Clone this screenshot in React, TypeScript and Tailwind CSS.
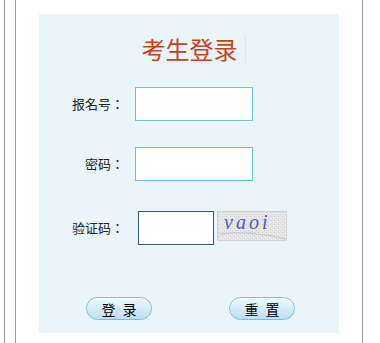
import React from "react";

const cjk = "font-['Microsoft_YaHei','Noto_Sans_CJK_SC',sans-serif]";
const labelFont = "font-['Noto_Sans_CJK_TC','Noto_Sans_CJK_SC',sans-serif]";

function Field({ label }: { label: string }) {
  return (
    <div className="flex items-center">
      <div className={`w-[86px] pr-[1px] text-right text-[13px] leading-[16px] text-[#222] ${labelFont}`}>{label}</div>
      <input
        type="text"
        className="ml-[10px] h-[34px] w-[118px] border border-[#67c2e2] bg-white outline-none"
      />
    </div>
  );
}

function Captcha() {
  return (
    <div className="relative ml-[3px] h-[30px] w-[70px] overflow-hidden border border-[#d0d0d0] bg-[#e4e4e4]">
      <svg className="absolute inset-0" width="70" height="30" viewBox="0 0 70 30">
        <defs>
          <pattern id="noise" width="4" height="4" patternUnits="userSpaceOnUse">
            <rect width="4" height="4" fill="#e6e6e6" />
            <rect x="0" y="0" width="1" height="1" fill="#c8c8c8" />
            <rect x="2" y="2" width="1" height="1" fill="#d2d2d2" />
            <rect x="3" y="1" width="1" height="1" fill="#f4f4f4" />
          </pattern>
        </defs>
        <rect width="70" height="30" fill="url(#noise)" />
        <path d="M2 22 Q 30 18 68 27" stroke="#b8b8c8" strokeWidth="0.8" fill="none" />
      </svg>
      <span className="absolute left-[6px] top-[-5px] font-['Liberation_Serif',serif] text-[20px] italic tracking-[3px] text-[#5656c4]">
        vaoi
      </span>
    </div>
  );
}

function PillButton({ a, b }: { a: string; b: string }) {
  return (
    <button className="flex h-[23px] w-[66px] items-center justify-center gap-[7px] rounded-full border border-[#7dbde0] bg-gradient-to-b from-[#eef8fd] to-[#bddff2] text-[14px] leading-none text-black shadow-[inset_0_1px_0_#ffffff]">
      <span>{a}</span>
      <span>{b}</span>
    </button>
  );
}

export default function App() {
  return (
    <div className={`min-h-screen bg-white ${cjk}`}>
      <div className="ml-[4px] min-h-screen border-l border-[#9a9a9a]">
        <div className="ml-[10px] min-h-screen w-[348px] border-x border-[#9a9a9a] pt-[14px]">
          <div className="mx-[23px] h-[319px] w-[300px] bg-[#e9f5f8]">
            <div className="flex justify-center pt-[21px]">
              <span className="border-r border-[#dbe8ea] pl-[9px] pr-[7px] text-[24px] leading-[28px] text-[#c7421b]">
                考生登录
              </span>
            </div>
            <div className="mt-[24px]">
              <Field label="报名号：" />
            </div>
            <div className="mt-[26px]">
              <Field label="密码：" />
            </div>
            <div className="mt-[30px] flex items-start">
              <div className={`flex h-[34px] w-[86px] items-center justify-end pr-[1px] text-[13px] leading-[16px] text-[#222] ${labelFont}`}>
                验证码：
              </div>
              <input
                type="text"
                className="ml-[13px] h-[34px] w-[76px] border border-[#2c5c60] bg-white outline-none"
              />
              <Captcha />
            </div>
            <div className="mt-[52px] flex pl-[47px]">
              <PillButton a="登" b="录" />
              <div className="ml-[77px]">
                <PillButton a="重" b="置" />
              </div>
            </div>
          </div>
        </div>
      </div>
    </div>
  );
}
